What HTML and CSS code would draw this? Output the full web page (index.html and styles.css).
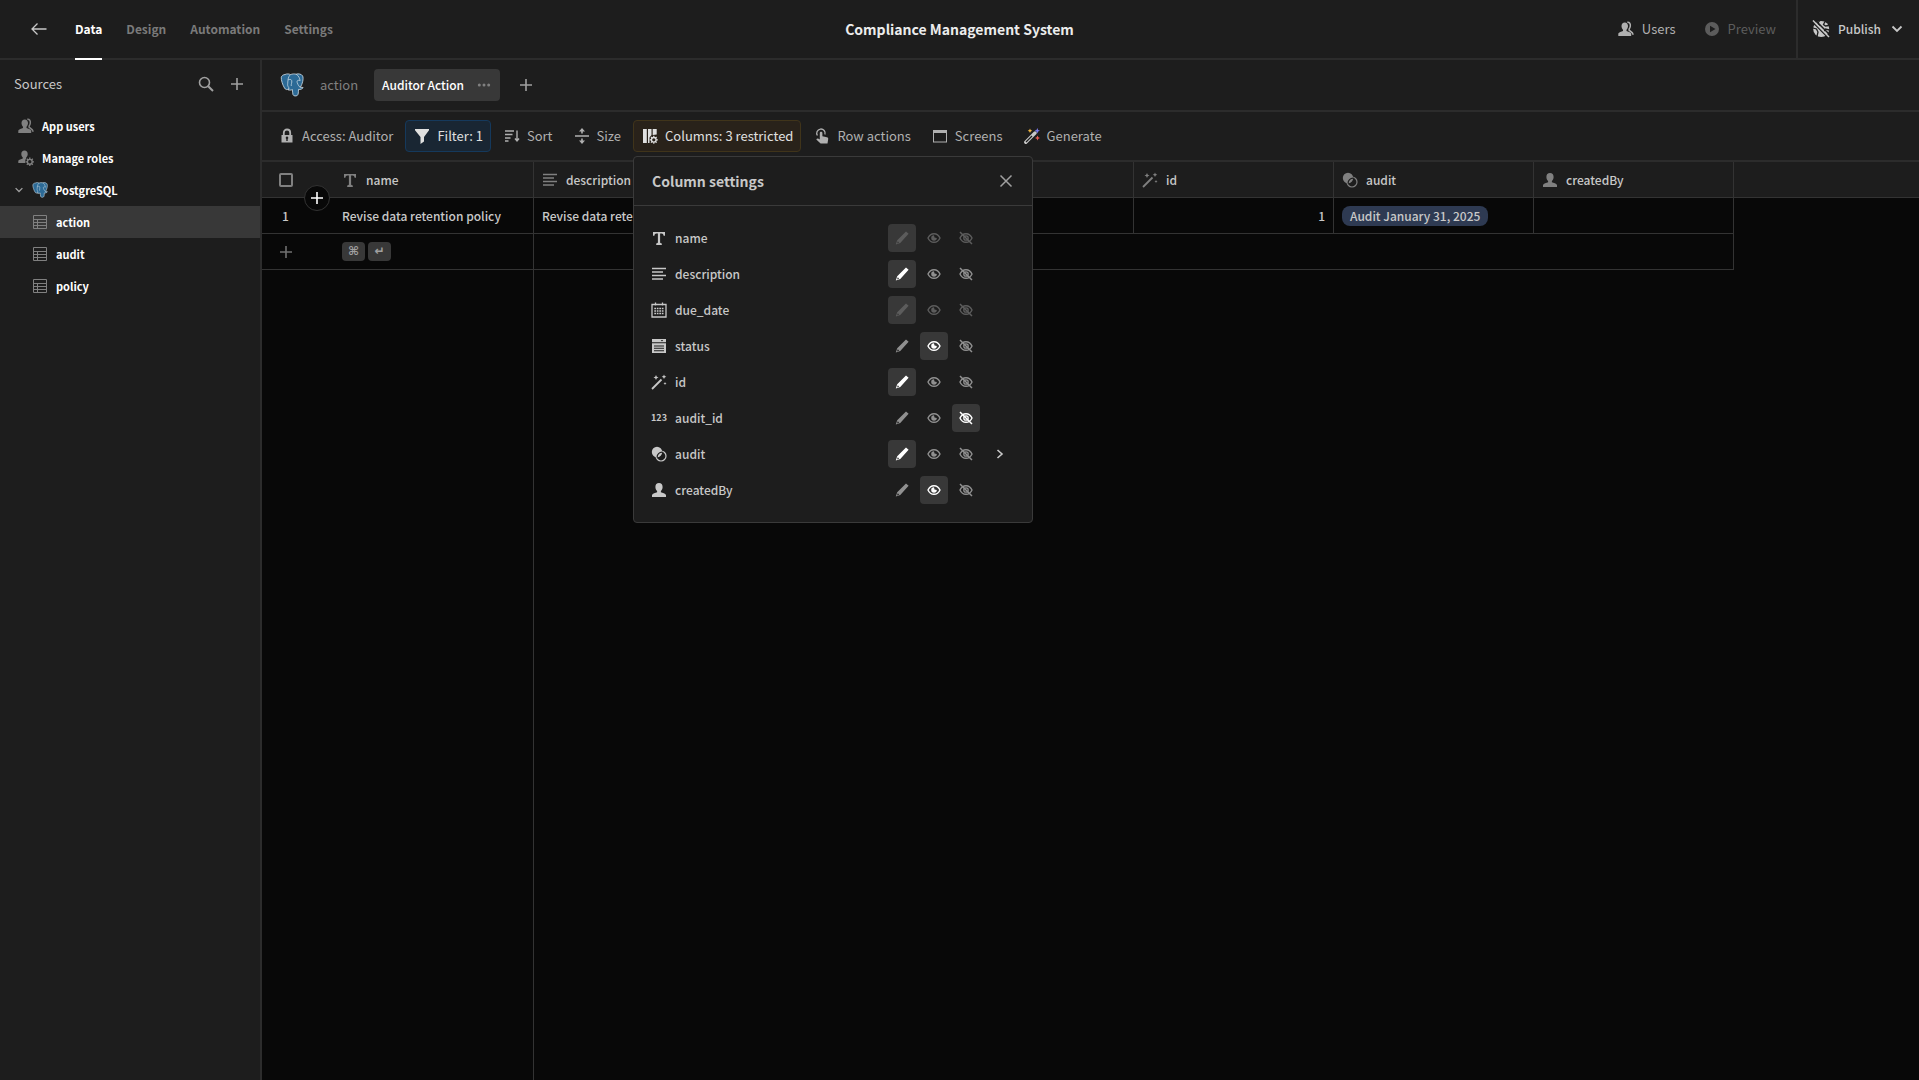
FILE: index.html
```html
<!DOCTYPE html>
<html lang="en">
<head>
  <meta charset="UTF-8">
  <meta name="viewport" content="width=device-width, initial-scale=1.0">
  <title>Compliance Management System</title>
  <link rel="stylesheet" href="styles.css">
</head>
<body>

<!-- icon sprites -->
<svg class="sprites" aria-hidden="true">
  <symbol id="i-back" viewBox="0 0 16 16"><path d="M15.500 8H1M6.500 2.500L1 8l5.500 5.500" fill="none" stroke="currentColor" stroke-width="1.300"/></symbol>
  <symbol id="i-search" viewBox="0 0 16 16"><circle cx="6.500" cy="6.500" r="5" fill="none" stroke="currentColor" stroke-width="1.600"/><path d="M10.200 10.200L15 15" stroke="currentColor" stroke-width="2"/></symbol>
  <symbol id="i-plus" viewBox="0 0 16 16"><path d="M8 2v12M2 8h12" stroke="currentColor" stroke-width="1.600"/></symbol>
  <symbol id="i-down" viewBox="0 0 16 16"><path d="M3.500 5.500L8 10l4.500-4.500" fill="none" stroke="currentColor" stroke-width="1.800"/></symbol>
  <symbol id="i-right" viewBox="0 0 16 16"><path d="M5.500 4L10 8l-4.500 4" fill="none" stroke="currentColor" stroke-width="1.600"/></symbol>
  <symbol id="i-close" viewBox="0 0 16 16"><path d="M2.500 2.500l11 11M13.500 2.500l-11 11" stroke="currentColor" stroke-width="1.500"/></symbol>
  <symbol id="i-more" viewBox="0 0 16 16"><g fill="currentColor"><circle cx="3.300" cy="8" r="1.500"/><circle cx="8" cy="8" r="1.500"/><circle cx="12.700" cy="8" r="1.500"/></g></symbol>
  <symbol id="i-user" viewBox="0 0 16 16"><path fill="currentColor" d="M8 1c2.300 0 3.600 1.600 3.600 4 0 1.600-.7 3.100-1.700 4v1.200c1.600.5 4.600 1.400 5.100 2.800V15H1v-2c.5-1.400 3.500-2.300 5.100-2.800V9c-1-.9-1.700-2.400-1.700-4C4.400 2.600 5.700 1 8 1z"/></symbol>
  <symbol id="i-users" viewBox="0 0 16 16"><path fill="currentColor" d="M6.800 1.500c2 0 3.200 1.500 3.200 3.600 0 1.500-.6 2.800-1.500 3.600v1.200c1.500.5 4.200 1.200 4.700 2.600V15H.3v-2.500c.5-1.400 3.200-2.100 4.700-2.600V8.700c-.9-.8-1.500-2.100-1.500-3.600 0-2.100 1.200-3.600 3.300-3.600z"/><path fill="none" stroke="currentColor" stroke-width="1.500" d="M9.300 1.300c2.200-.3 3.300 1.400 3 3.700-.1 1.300-.6 2.300-1.200 3.200v1l3.200 2.600.9 2"/></symbol>
  <symbol id="i-user-gear" viewBox="0 0 16 16"><path fill="currentColor" d="M6.500.5c2 0 3.200 1.400 3.200 3.400 0 1.500-.6 2.600-1.500 3.500v1c-.8 1-1.200 2.500-1 4.600H.3v-2.200c.5-1.300 3-1.900 4.500-2.400v-1c-.9-.9-1.500-2-1.500-3.500C3.300 1.900 4.500.5 6.500.5z"/><circle cx="11.800" cy="11.800" r="2.400" fill="none" stroke="currentColor" stroke-width="1.400"/><path d="M11.800 7.500v1.700M11.800 14.400v1.700M7.500 11.800h1.700M14.400 11.800h1.700M8.800 8.800L10 10M13.600 13.600l1.200 1.200M14.800 8.800L13.600 10M10 13.600l-1.200 1.200" stroke="currentColor" stroke-width="1.300"/></symbol>
  <symbol id="i-table" viewBox="0 0 16 16"><path d="M1.500 1.500h13v13h-13zM1.500 5.500h13M1.500 8.500h13M1.500 11.500h13M5.500 5.500v9" fill="none" stroke="currentColor"/></symbol>
  <symbol id="i-play" viewBox="0 0 16 16"><path fill="currentColor" fill-rule="evenodd" d="M8 1a7 7 0 100 14A7 7 0 008 1zM6 4.700L11.500 8 6 11.300z"/></symbol>
  <symbol id="i-globe-off" viewBox="0 0 18 18"><circle cx="9.200" cy="9" r="8" fill="currentColor"/><path d="M7.500.5l-1.500 3 2 2M13 1.500l-1.500 3 2 1.500 3.500-.5M1 8l3.500 1 1.500 3-1 4.500M17.500 10l-4-1-1.500 2.500" fill="none" stroke="#1d1d1d" stroke-width="1.300"/><path d="M0 1.500L16.500 18M2.500-.5L19 16" stroke="#1d1d1d" stroke-width="1.500"/><path d="M1 .5l16 16.500" stroke="currentColor" stroke-width="1.500"/></symbol>
  <symbol id="i-lock" viewBox="0 0 16 16"><path d="M4.800 8V4.700a3.200 3.200 0 016.400 0V8" fill="none" stroke="currentColor" stroke-width="1.800"/><path fill="currentColor" fill-rule="evenodd" d="M2.500 7h11v7.500h-11zM8 8.600a1.300 1.300 0 00-.7 2.400v2h1.400v-2A1.300 1.300 0 008 8.600z"/></symbol>
  <symbol id="i-filter" viewBox="0 0 16 16"><path fill="currentColor" d="M1 1h14v1.200L10 9v4.500L6.500 16V9L1 2.200z"/></symbol>
  <symbol id="i-sort" viewBox="0 0 16 16"><path d="M1 3h9M1 6.500h7.500M1 10h5.500M1 13h3.500M13 2.500v10M11 10.500l2 2.500 2-2.500" fill="none" stroke="currentColor" stroke-width="1.400"/></symbol>
  <symbol id="i-size" viewBox="0 0 16 16"><path d="M1 8h14M8 1v4.500M8 10.500V15" stroke="currentColor" stroke-width="1.600"/><path fill="currentColor" d="M8 0l3 3.500H5zM8 16l3-3.500H5z"/></symbol>
  <symbol id="i-columns" viewBox="0 0 16 16"><path fill="currentColor" d="M1 1h3.800v14H1zM6 1h3.500v6L7.500 9.500V15H6zM10.700 1h4v5.500l-4 .5z"/><circle cx="11.800" cy="11.800" r="2.300" fill="none" stroke="currentColor" stroke-width="1.300"/><path d="M11.800 7.800v1.600M11.800 14.200v1.600M7.800 11.800h1.600M14.200 11.800h1.600M9 9l1.100 1.100M13.500 13.500l1.100 1.100M14.600 9l-1.100 1.100M10.100 13.500L9 14.600" stroke="currentColor" stroke-width="1.200"/></symbol>
  <symbol id="i-tap" viewBox="0 0 16 16"><path d="M3.400 7.500a4.200 4.200 0 117.500-1" fill="none" stroke="currentColor" stroke-width="1.300"/><path fill="currentColor" d="M5.800 4.800c0-1.500 2.600-1.500 2.600 0v3.400l4.600 1c.9.200 1.400.9 1.200 1.800l-.7 4.500H6.600L2.300 11.400c.6-1.100 1.800-1.100 3.500 0z"/></symbol>
  <symbol id="i-screen" viewBox="0 0 16 16"><path fill="currentColor" fill-rule="evenodd" d="M1 2h14v12.500H1zM2 5v8.500h12V5z"/></symbol>
  <symbol id="i-generate" viewBox="0 0 16 16"><path d="M1.800 14.200L11 5" stroke="#c8c8c8" stroke-width="3.400" stroke-linecap="round"/><path d="M2 14L8 8" stroke="#1d1d1d" stroke-width="1.200"/><path d="M6 .5l.7 1.600 1.600.7-1.600.7L6 5l-.7-1.500-1.600-.7 1.600-.7z" fill="#f5b942"/><path d="M13.300 0l.8 1.900 1.900.8-1.900.8-.8 1.900-.8-1.900-1.900-.8 1.900-.8z" fill="#7d7bf0"/><path d="M13.500 7.500l.8 1.800 1.700.7-1.700.7-.8 1.800-.8-1.800-1.700-.7 1.700-.7z" fill="#e8594f"/></symbol>
  <symbol id="i-text" viewBox="0 0 16 16"><path fill="currentColor" d="M2 2h12v3.800h-1.400c-.2-1.500-.8-2.200-2-2.200H9.100v8.700c0 .8.500 1.100 1.700 1.200V15H5.200v-1.500c1.200-.1 1.700-.4 1.700-1.200V3.600H5.400c-1.200 0-1.800.7-2 2.200H2z"/></symbol>
  <symbol id="i-lines" viewBox="0 0 16 16"><path d="M1 2.500h14M1 6h11M1 9.500h14M1 13h11" stroke="currentColor" stroke-width="1.600"/></symbol>
  <symbol id="i-calendar" viewBox="0 0 16 16"><path d="M1 2.500h14v12.500H1zM4.500.5v3M11.500.5v3" fill="none" stroke="currentColor" stroke-width="1.300"/><path d="M3.300 6.500h9.500M3.300 9h9.500M3.300 11.500h9.500" stroke="currentColor" stroke-width="1.700" stroke-dasharray="1.700 .8"/></symbol>
  <symbol id="i-form" viewBox="0 0 16 16"><path fill="currentColor" fill-rule="evenodd" d="M1 1h14v3.200H1zM9.800 2l1.200 1.400L12.200 2zM1 5.200h14V15H1zM3 7.400v1h10v-1zM3 9.800v1h10v-1zM3 12.200v1h10v-1z"/></symbol>
  <symbol id="i-wand" viewBox="0 0 16 16"><path d="M1 15l9.500-9.500" stroke="currentColor" stroke-width="1.800"/><path fill="currentColor" d="M5 1l.8 1.700 1.700.8-1.700.8L5 6l-.8-1.700-1.700-.8 1.700-.8zM13 .5l.7 1.600 1.600.7-1.600.7-.7 1.600-.7-1.600-1.600-.7 1.600-.7zM14 8l.5 1 1 .5-1 .5-.5 1-.5-1-1-.5 1-.5z"/></symbol>
  <symbol id="i-relation" viewBox="0 0 16 16"><circle cx="6" cy="6" r="5.200" fill="currentColor"/><circle cx="10" cy="10" r="5" fill="none" stroke="currentColor" stroke-width="1.200"/><path d="M6.100 11.200a5 5 0 015.100-5.100" fill="none" stroke="#1d1d1d" stroke-width="1.200"/></symbol>
  <symbol id="i-pencil" viewBox="0 0 16 16"><path fill="currentColor" fill-rule="evenodd" d="M12 1.500l2.600 2.300-8.300 9.200L1.800 14.500l1.400-4.300zM3.800 11.200l-.8 2.200 2.200-.8z"/></symbol>
  <symbol id="i-eye" viewBox="0 0 16 16"><path d="M2 8c1.300-2.900 3.400-4.300 6-4.300s4.700 1.400 6 4.300c-1.300 2.900-3.400 4.300-6 4.300S3.300 10.900 2 8z" fill="none" stroke="currentColor" stroke-width="1.400"/><path fill="currentColor" d="M8 5.200a2.800 2.800 0 102.800 2.800L8.500 7.500z"/></symbol>
  <symbol id="i-eye-off" viewBox="0 0 16 16"><path d="M2 8c1.300-2.900 3.400-4.300 6-4.300s4.700 1.400 6 4.300c-1.300 2.900-3.400 4.300-6 4.300S3.300 10.900 2 8z" fill="none" stroke="currentColor" stroke-width="1.400"/><circle cx="8" cy="8" r="2.200" fill="none" stroke="currentColor" stroke-width="1.300"/><path d="M2 2l12 12" stroke="currentColor" stroke-width="1.500"/></symbol>
  <symbol id="i-postgres" viewBox="0 0 24 24">
    <path fill="#2c6a96" stroke="#d6e2ea" stroke-width=".8" stroke-linejoin="round" d="M5 1.500c2-.9 4-.7 5.500.1 1.600-.7 4-.9 5.600-.4 2.200-.8 5.400-.2 6.500 1.700 1.300 2.500-.2 8.300-2.300 11.300l2.800.3c-.3 1.300-2.800 2.300-4.600 1.900-.2 2.600.1 4.900-1.200 6-1.300.9-3.600.8-4.300-.7-.6-1.500-.3-3.500-.6-5.200-1.200.8-3 .7-4.300.4l.9-1.400c-1.700 1.700-3.500 1.300-4.500-.5C2.700 12 .9 6.700 1.300 4.200 1.600 2.700 3.200 1.700 5 1.500z"/>
    <path fill="none" stroke="#d6e2ea" stroke-width=".7" d="M10.500 1.600C7.500 4 8 8.500 7.600 11.500c0 1.800 1 2.800 1.600 3.600M8 7c1.300-1 3.300-.8 3.700.6.500 2-.8 3.600-.4 5.400M16.100 1.200c2.500 1.500 3.700 4 4 6.600-.8-.7-2.500-.8-3 .3-.3 1.600 1.200 4.600 3.200 6.400"/>
  </symbol>
</svg>

<header class="topbar">
  <a class="back" href="#" aria-label="Back"><svg class="icon"><use href="#i-back"/></svg></a>
  <nav class="tabs">
    <a href="#" class="active">Data</a>
    <a href="#">Design</a>
    <a href="#">Automation</a>
    <a href="#">Settings</a>
  </nav>
  <h1 class="app-name">Compliance Management System</h1>
  <div class="actions">
    <button class="top-btn"><svg class="icon"><use href="#i-users"/></svg>Users</button>
    <button class="top-btn" disabled><svg class="icon"><use href="#i-play"/></svg>Preview</button>
    <button class="publish"><svg class="icon globe"><use href="#i-globe-off"/></svg>Publish<svg class="icon"><use href="#i-down"/></svg></button>
  </div>
</header>

<div class="layout">
  <aside class="sidebar">
    <div class="sidebar-head">
      <span>Sources</span>
      <button class="icon-btn" aria-label="Search"><svg class="icon"><use href="#i-search"/></svg></button>
      <button class="icon-btn" aria-label="Add source"><svg class="icon"><use href="#i-plus"/></svg></button>
    </div>
    <nav class="sources">
      <a href="#" class="source"><svg class="icon"><use href="#i-users"/></svg>App users</a>
      <a href="#" class="source"><svg class="icon"><use href="#i-user-gear"/></svg>Manage roles</a>
      <a href="#" class="source parent"><svg class="caret"><use href="#i-down"/></svg><svg class="icon"><use href="#i-postgres"/></svg>PostgreSQL</a>
      <a href="#" class="source child selected"><svg class="icon"><use href="#i-table"/></svg>action</a>
      <a href="#" class="source child"><svg class="icon"><use href="#i-table"/></svg>audit</a>
      <a href="#" class="source child"><svg class="icon"><use href="#i-table"/></svg>policy</a>
    </nav>
  </aside>

  <main class="content">
    <div class="views">
      <svg class="logo"><use href="#i-postgres"/></svg>
      <a href="#" class="view">action</a>
      <a href="#" class="view active">Auditor Action<svg class="icon"><use href="#i-more"/></svg></a>
      <button class="icon-btn" aria-label="Add view"><svg class="icon"><use href="#i-plus"/></svg></button>
    </div>

    <div class="toolbar">
      <button class="tool"><svg class="icon"><use href="#i-lock"/></svg>Access: Auditor</button>
      <button class="tool filter"><svg class="icon"><use href="#i-filter"/></svg>Filter: 1</button>
      <button class="tool"><svg class="icon"><use href="#i-sort"/></svg>Sort</button>
      <button class="tool"><svg class="icon"><use href="#i-size"/></svg>Size</button>
      <div class="tool-wrap">
        <button class="tool columns"><svg class="icon"><use href="#i-columns"/></svg>Columns: 3 restricted</button>
        <section class="popover">
          <div class="popover-head">
            <h2>Column settings</h2>
            <button class="icon-btn" aria-label="Close"><svg class="icon"><use href="#i-close"/></svg></button>
          </div>
          <ul class="column-list">
            <li class="locked">
              <svg class="icon"><use href="#i-text"/></svg><span>name</span>
              <button class="perm on" aria-label="Writable" disabled><svg class="icon"><use href="#i-pencil"/></svg></button>
              <button class="perm" aria-label="Read only" disabled><svg class="icon"><use href="#i-eye"/></svg></button>
              <button class="perm" aria-label="Hidden" disabled><svg class="icon"><use href="#i-eye-off"/></svg></button>
            </li>
            <li>
              <svg class="icon"><use href="#i-lines"/></svg><span>description</span>
              <button class="perm on" aria-label="Writable"><svg class="icon"><use href="#i-pencil"/></svg></button>
              <button class="perm" aria-label="Read only"><svg class="icon"><use href="#i-eye"/></svg></button>
              <button class="perm" aria-label="Hidden"><svg class="icon"><use href="#i-eye-off"/></svg></button>
            </li>
            <li class="locked">
              <svg class="icon"><use href="#i-calendar"/></svg><span>due_date</span>
              <button class="perm on" aria-label="Writable" disabled><svg class="icon"><use href="#i-pencil"/></svg></button>
              <button class="perm" aria-label="Read only" disabled><svg class="icon"><use href="#i-eye"/></svg></button>
              <button class="perm" aria-label="Hidden" disabled><svg class="icon"><use href="#i-eye-off"/></svg></button>
            </li>
            <li>
              <svg class="icon"><use href="#i-form"/></svg><span>status</span>
              <button class="perm" aria-label="Writable"><svg class="icon"><use href="#i-pencil"/></svg></button>
              <button class="perm on" aria-label="Read only"><svg class="icon"><use href="#i-eye"/></svg></button>
              <button class="perm" aria-label="Hidden"><svg class="icon"><use href="#i-eye-off"/></svg></button>
            </li>
            <li>
              <svg class="icon"><use href="#i-wand"/></svg><span>id</span>
              <button class="perm on" aria-label="Writable"><svg class="icon"><use href="#i-pencil"/></svg></button>
              <button class="perm" aria-label="Read only"><svg class="icon"><use href="#i-eye"/></svg></button>
              <button class="perm" aria-label="Hidden"><svg class="icon"><use href="#i-eye-off"/></svg></button>
            </li>
            <li>
              <b class="icon digits">123</b><span>audit_id</span>
              <button class="perm" aria-label="Writable"><svg class="icon"><use href="#i-pencil"/></svg></button>
              <button class="perm" aria-label="Read only"><svg class="icon"><use href="#i-eye"/></svg></button>
              <button class="perm on" aria-label="Hidden"><svg class="icon"><use href="#i-eye-off"/></svg></button>
            </li>
            <li>
              <svg class="icon"><use href="#i-relation"/></svg><span>audit</span>
              <button class="perm on" aria-label="Writable"><svg class="icon"><use href="#i-pencil"/></svg></button>
              <button class="perm" aria-label="Read only"><svg class="icon"><use href="#i-eye"/></svg></button>
              <button class="perm" aria-label="Hidden"><svg class="icon"><use href="#i-eye-off"/></svg></button>
              <button class="expand" aria-label="Expand audit"><svg class="icon"><use href="#i-right"/></svg></button>
            </li>
            <li>
              <svg class="icon"><use href="#i-user"/></svg><span>createdBy</span>
              <button class="perm" aria-label="Writable"><svg class="icon"><use href="#i-pencil"/></svg></button>
              <button class="perm on" aria-label="Read only"><svg class="icon"><use href="#i-eye"/></svg></button>
              <button class="perm" aria-label="Hidden"><svg class="icon"><use href="#i-eye-off"/></svg></button>
            </li>
          </ul>
        </section>
      </div>
      <button class="tool"><svg class="icon"><use href="#i-tap"/></svg>Row actions</button>
      <button class="tool"><svg class="icon"><use href="#i-screen"/></svg>Screens</button>
      <button class="tool"><svg class="icon"><use href="#i-generate"/></svg>Generate</button>
    </div>

    <div class="grid">
      <button class="add-row" aria-label="Insert row"><svg class="icon"><use href="#i-plus"/></svg></button>
      <table>
        <colgroup>
          <col class="gutter"><col class="field"><col class="field"><col class="field"><col class="field"><col class="field"><col class="field"><col class="field"><col>
        </colgroup>
        <thead>
          <tr>
            <th class="first"><input type="checkbox" aria-label="Select all rows"></th>
            <th><div class="head"><svg class="icon"><use href="#i-text"/></svg>name</div></th>
            <th><div class="head"><svg class="icon"><use href="#i-lines"/></svg>description</div></th>
            <th></th>
            <th></th>
            <th><div class="head"><svg class="icon"><use href="#i-wand"/></svg>id</div></th>
            <th><div class="head"><svg class="icon"><use href="#i-relation"/></svg>audit</div></th>
            <th><div class="head"><svg class="icon"><use href="#i-user"/></svg>createdBy</div></th>
            <th class="rest"></th>
          </tr>
        </thead>
        <tbody>
          <tr>
            <td class="first">1</td>
            <td>Revise data retention policy</td>
            <td>Revise data retention policy</td>
            <td></td>
            <td></td>
            <td class="number">1</td>
            <td><span class="pill">Audit January 31, 2025</span></td>
            <td></td>
            <td class="rest"></td>
          </tr>
          <tr class="new-row">
            <td class="first"><button class="icon-btn" aria-label="Add row"><svg class="icon"><use href="#i-plus"/></svg></button></td>
            <td><kbd>⌘</kbd><kbd>↵</kbd></td>
            <td colspan="6"></td>
            <td class="rest"></td>
          </tr>
        </tbody>
      </table>
      <div class="pinned-edge"></div>
    </div>
  </main>
</div>

</body>
</html>
```

FILE: styles.css
```css
* {
  box-sizing: border-box;
}

body {
  display: flex;
  flex-direction: column;
  min-height: 100vh;
  margin: 0;
  font-family: "Noto Sans CJK SC", sans-serif;
  font-size: 13px;
  line-height: 16px;
  color: #c8c8c8;
  background-color: #080808;
}

a {
  color: inherit;
  text-decoration: none;
}

button {
  display: flex;
  align-items: center;
  padding: 0;
  font: inherit;
  color: inherit;
  background: none;
  border: none;
  cursor: pointer;
}

.sprites {
  display: none;
}

.icon {
  flex: none;
  width: 16px;
  height: 16px;
}

.icon-btn {
  color: #a0a0a0;
}

/* top bar */
.topbar {
  display: grid;
  grid-template-columns: 1fr auto 1fr;
  height: 60px;
  background-color: #1d1d1d;
  border-bottom: 2px solid #2c2c2c;
}

.back {
  grid-area: 1 / 1;
  display: flex;
  align-items: center;
  width: 75px;
  padding-left: 31px;
}

.tabs {
  grid-area: 1 / 1;
  display: flex;
  gap: 24px;
  margin: 0 0 -2px 75px;
  font-size: 12px;
  font-weight: 600;
  color: #7a7a7a;
}

.tabs a {
  display: flex;
  align-items: center;
  border-bottom: 2px solid transparent;
}

.tabs .active {
  color: #fff;
  border-color: #fff;
}

.app-name {
  align-self: center;
  margin: 0;
  font-size: 14px;
  font-weight: 600;
  color: #ececec;
}

.actions {
  display: flex;
  justify-content: flex-end;
}

.top-btn {
  gap: 8px;
  margin-right: 28px;
  color: #b0b0b0;
}

.top-btn:disabled {
  margin-right: 20px;
  color: #5c5c5c;
}

.publish {
  gap: 8px;
  padding: 0 14px;
  font-size: 12px;
  font-weight: 500;
  border-left: 2px solid #2c2c2c;
}

.globe {
  width: 18px;
  height: 18px;
}

.layout {
  display: flex;
  flex: 1;
}

/* sidebar */
.sidebar {
  flex: none;
  width: 262px;
  background-color: #1d1d1d;
  border-right: 2px solid #2c2c2c;
}

.sidebar-head {
  display: flex;
  align-items: center;
  gap: 15px;
  height: 48px;
  padding: 0 15px 0 14px;
}

.sidebar-head span {
  flex: 1;
}

.sources {
  padding-top: 2px;
}

.source {
  display: flex;
  align-items: center;
  gap: 8px;
  height: 32px;
  padding-left: 18px;
  font-size: 11px;
  font-weight: 600;
  color: #fff;
}

.source .icon {
  color: #808080;
}

.parent {
  gap: 7px;
  padding-left: 13px;
}

.child {
  padding-left: 32px;
}

.selected {
  background-color: #383838;
}

.caret {
  width: 12px;
  height: 12px;
  color: #a0a0a0;
}

/* view tabs */
.content {
  display: flex;
  flex: 1;
  flex-direction: column;
  min-width: 0;
}

.views {
  display: flex;
  align-items: center;
  height: 52px;
  padding-left: 18px;
  background-color: #1d1d1d;
  border-bottom: 2px solid #2c2c2c;
}

.logo {
  width: 24px;
  height: 24px;
  margin-right: 8px;
}

.view {
  display: flex;
  align-items: center;
  gap: 12px;
  height: 32px;
  margin-right: 8px;
  padding: 0 8px;
  color: #808080;
  border-radius: 4px;
}

.view.active {
  margin-right: 18px;
  font-size: 12px;
  font-weight: 500;
  color: #fff;
  background-color: #383838;
}

.view .icon {
  color: #808080;
}

/* toolbar */
.toolbar {
  display: flex;
  align-items: center;
  gap: 4px;
  height: 50px;
  padding-left: 8px;
  background-color: #1d1d1d;
  border-bottom: 2px solid #2c2c2c;
}

.tool {
  gap: 7px;
  height: 32px;
  padding: 0 7px 0 8px;
  color: #b0b0b0;
  border: 1px solid transparent;
  border-radius: 4px;
}

.filter {
  color: #e0e0e0;
  background-color: #192633;
  border-color: #15395c;
}

.columns {
  color: #e0e0e0;
  background-color: #29221a;
  border-color: #40341a;
}

.tool-wrap {
  position: relative;
}

/* column settings */
.popover {
  position: absolute;
  top: calc(100% + 4px);
  left: 0;
  z-index: 2;
  width: 400px;
  background-color: #1d1d1d;
  border: 1px solid #3a3a3a;
  border-radius: 4px;
}

.popover-head {
  display: flex;
  align-items: center;
  justify-content: space-between;
  height: 49px;
  padding: 0 18px;
  border-bottom: 1px solid #3a3a3a;
}

.popover-head h2 {
  margin: 0;
  font-size: 14px;
  font-weight: 600;
}

.column-list {
  margin: 0;
  padding: 14px 17px;
  font-size: 12px;
  list-style: none;
}

.column-list li {
  display: flex;
  align-items: center;
  gap: 4px;
  height: 36px;
  padding-right: 35px;
  font-weight: 500;
}

.column-list span {
  flex: 1;
  padding-left: 4px;
}

.digits {
  font-size: 9px;
}

.perm {
  justify-content: center;
  width: 28px;
  height: 28px;
  color: #909090;
  border-radius: 4px;
}

.perm.on {
  color: #fff;
  background-color: #383838;
}

.locked .perm {
  color: #5c5c5c;
}

.expand {
  margin: 0 -28px 0 8px;
}

/* data grid */
.grid {
  position: relative;
  display: flex;
  flex: 1;
  flex-direction: column;
}

table {
  width: 100%;
  font-size: 12px;
  table-layout: fixed;
  border-spacing: 0;
}

.gutter {
  width: 72px;
}

.field {
  width: 200px;
}

th,
td {
  height: 36px;
  padding: 0 8px;
  overflow: hidden;
  font-weight: 500;
  text-align: left;
  white-space: nowrap;
  border-right: 1px solid #333;
  border-bottom: 1px solid #333;
}

th {
  background-color: #1d1d1d;
}

.first {
  padding-left: 17px;
  border-right: none;
}

td.first {
  padding-left: 20px;
}

.rest {
  border-right: none;
}

td.rest {
  border-bottom: none;
}

.head {
  display: flex;
  align-items: center;
  gap: 8px;
}

.head .icon {
  color: #808080;
}

input[type="checkbox"] {
  display: block;
  width: 14px;
  height: 14px;
  margin: 0;
  appearance: none;
  border: 2px solid #808080;
  border-radius: 2px;
}

.number {
  text-align: right;
}

.pill {
  display: inline-block;
  height: 20px;
  padding: 0 8px;
  line-height: 20px;
  background-color: #2e3a52;
  border-radius: 8px;
}

.new-row .first {
  padding-left: 16px;
}

.new-row .icon-btn {
  color: #707070;
}

kbd {
  display: inline-block;
  width: 23px;
  height: 19px;
  margin-right: 3px;
  font-family: "DejaVu Sans", sans-serif;
  font-size: 12px;
  font-weight: 700;
  line-height: 19px;
  color: #a0a0a0;
  text-align: center;
  background-color: #383838;
  border-radius: 4px;
}

.add-row {
  position: absolute;
  top: 23px;
  left: 42px;
  justify-content: center;
  width: 26px;
  height: 26px;
  color: #fff;
  background-color: #080808;
  border: 1px solid #333;
  border-radius: 50%;
}

.pinned-edge {
  flex: 1;
  width: 272px;
  border-right: 1px solid #333;
}
```
